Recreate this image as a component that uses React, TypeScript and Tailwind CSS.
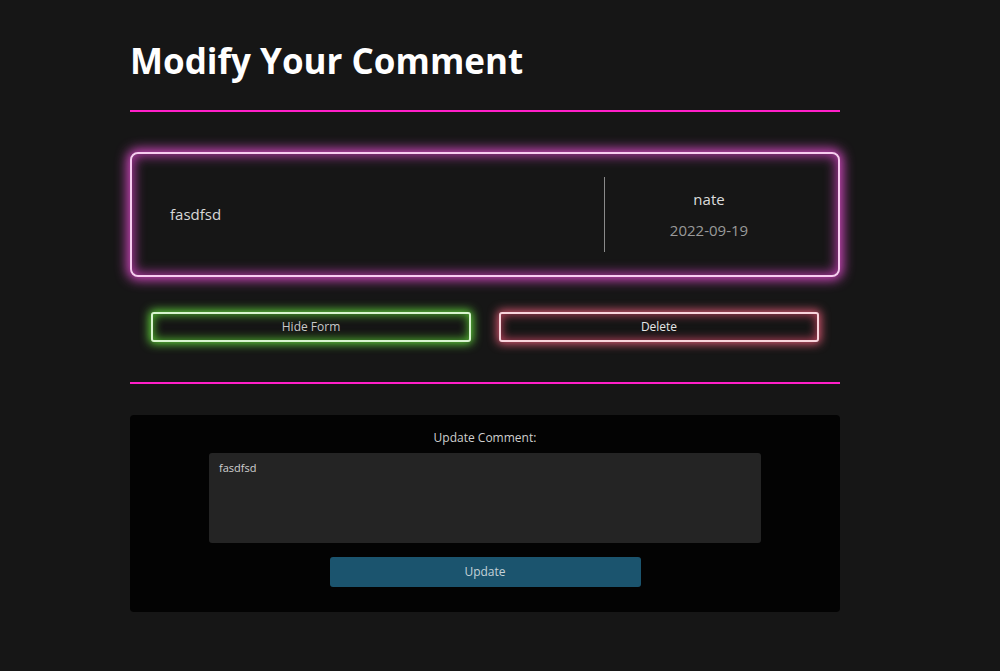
import React from "react";

export default function App() {
  return (
    <div
      className="min-h-[671px] w-full bg-[#161616] text-[#d6d6d6]"
      style={{ fontFamily: '"Open Sans", "Noto Sans", sans-serif' }}
    >
      <div className="ml-[130px] w-[710px] pt-[36px]">
        <h1 className="text-[35px] font-bold leading-[50px] text-white">Modify Your Comment</h1>
        <div className="mt-[24px] h-[2px] bg-[#ff1fc8]" />

        <div className="mt-[40px] flex h-[125px] rounded-[8px] border-2 border-[#f7cdf0] bg-[#161616] shadow-[0_0_12px_3px_#d248c0,inset_0_0_12px_2px_#b03aa2]">
          <div className="flex flex-1 items-center pl-[38px] text-[15px] text-[#d8d8d8]">fasdfsd</div>
          <div className="my-[23px] w-px bg-[#8a8a8a]" />
          <div className="flex w-[233px] flex-col items-center justify-center gap-[11px] pr-[25px]">
            <div className="text-[15px] leading-[20px] text-[#dcdcdc]">nate</div>
            <div className="text-[15px] leading-[20px] text-[#9a9a9a]">2022-09-19</div>
          </div>
        </div>

        <div className="mt-[35px] flex justify-center gap-[28px]">
          <button className="h-[30px] w-[320px] rounded-[3px] border-2 border-[#d9f5cf] bg-[#151515] text-[12px] text-[#c8c8c8] shadow-[0_0_10px_2px_#5fcf3a,inset_0_0_10px_1px_#4fb02e]">
            Hide Form
          </button>
          <button className="h-[30px] w-[320px] rounded-[3px] border-2 border-[#f8d4dc] bg-[#151515] text-[12px] text-[#e6e6e6] shadow-[0_0_10px_2px_#d4566f,inset_0_0_10px_1px_#b04058]">
            Delete
          </button>
        </div>

        <div className="mt-[40px] h-[2px] bg-[#ff1fc8]" />

        <div className="mt-[31px] flex flex-col items-center rounded-[4px] bg-[#030303] pb-[25px] pt-[15px]">
          <div className="text-[12px] leading-[16px] text-[#cfcfcf]">Update Comment:</div>
          <div className="mt-[7px] h-[90px] w-[552px] rounded-[3px] bg-[#242424] px-[10px] py-[7px] text-[11px] text-[#d0d0d0]">
            fasdfsd
          </div>
          <button className="mt-[14px] h-[30px] w-[311px] rounded-[3px] bg-[#1b546e] text-[12px] text-[#c4d2d8]">
            Update
          </button>
        </div>
      </div>
    </div>
  );
}
